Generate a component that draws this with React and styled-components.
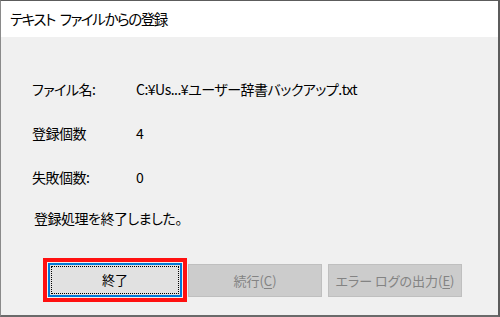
import React from "react";
import styled, { createGlobalStyle } from "styled-components";

const Global = createGlobalStyle`
  html, body { margin: 0; padding: 0; background: #f0f0f0; }
  body { width: 500px; height: 317px; overflow: hidden; }
  * { box-sizing: border-box; }
`;

const Window = styled.div`
  width: 500px;
  height: 317px;
  display: flex;
  flex-direction: column;
  background: #f0f0f0;
  border-top: 1px solid #5c5c5c;
  border-left: 1px solid #8a8a8a;
  border-right: 2px solid #5c5c5c;
  border-bottom: 2px solid #6a6a6a;
  font-family: "Noto Sans CJK JP", "Noto Sans", sans-serif;
  font-feature-settings: "palt";
  color: #000;
`;

const TitleBar = styled.div`
  height: 36px;
  background: #ffffff;
  display: flex;
  align-items: center;
  padding-left: 9px;
  padding-bottom: 1px;
  font-size: 14.5px;
  letter-spacing: -1.4px;
  word-spacing: 3px;
  white-space: nowrap;
`;

const Body = styled.div`
  flex: 1;
  display: flex;
  flex-direction: column;
  padding-top: 41px;
  font-size: 14px;
  line-height: 22px;
  letter-spacing: -0.5px;
`;

const InfoGrid = styled.div`
  display: grid;
  grid-template-columns: 104px auto;
  row-gap: 22px;
  padding-left: 31px;
`;

const Label = styled.div`
  white-space: nowrap;
`;

const Value = styled.div`
  white-space: nowrap;
`;

const Message = styled.div`
  margin-top: 19px;
  padding-left: 33px;
`;

const ButtonRow = styled.div`
  display: flex;
  gap: 6px;
  margin-top: 34px;
  padding-left: 47px;
  letter-spacing: 0;
`;

const Button = styled.div`
  width: 134px;
  height: ${(p) => (p.$default ? "34px" : "33px")};
  margin-top: ${(p) => (p.$default ? "0" : "1px")};
  display: flex;
  align-items: center;
  justify-content: center;
  font-size: 13px;
  line-height: 18px;
  position: relative;
  background: ${(p) => (p.$default ? "#e1e1e1" : "#cccccc")};
  border: ${(p) => (p.$default ? "2px solid #0078d7" : "1px solid #bfbfbf")};
  color: ${(p) => (p.$default ? "#000" : "#838383")};
  outline: ${(p) => (p.$highlight ? "4px solid #ff1010" : "none")};
  outline-offset: 1px;
`;

const FocusRect = styled.span`
  position: absolute;
  inset: 1px;
  border: 1px dotted #000;
  pointer-events: none;
`;

const Key = styled.span`
  text-decoration: underline;
  text-underline-offset: 2px;
`;

export default function App() {
  return (
    <>
      <Global />
      <Window>
        <TitleBar>テキスト ファイルからの登録</TitleBar>
        <Body>
          <InfoGrid>
            <Label>ファイル名:</Label>
            <Value>C:¥Us...¥ユーザー辞書バックアップ.txt</Value>
            <Label>登録個数</Label>
            <Value>4</Value>
            <Label>失敗個数:</Label>
            <Value>0</Value>
          </InfoGrid>
          <Message>登録処理を終了しました。</Message>
          <ButtonRow>
            <Button $default $highlight>
              <FocusRect />
              終了
            </Button>
            <Button>
              続行(<Key>C</Key>)
            </Button>
            <Button>
              エラー ログの出力(<Key>E</Key>)
            </Button>
          </ButtonRow>
        </Body>
      </Window>
    </>
  );
}
